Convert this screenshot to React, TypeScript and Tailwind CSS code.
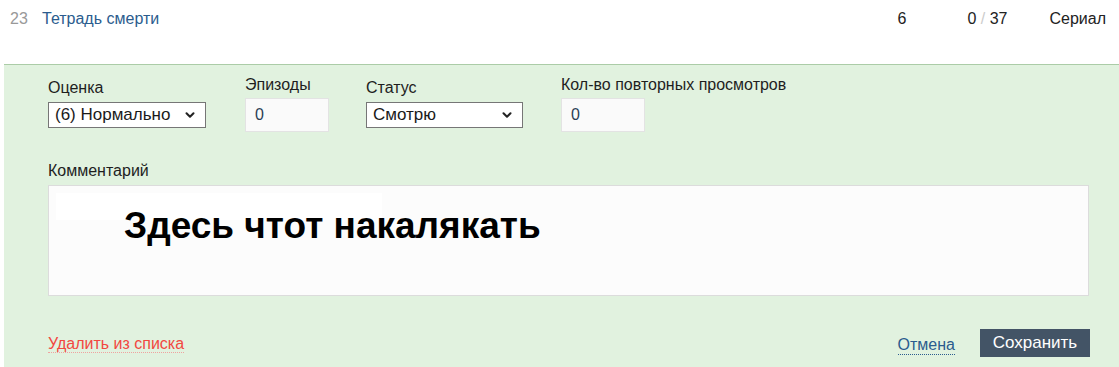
import { ChevronDown } from "lucide-react";

function Select({ value, width }: { value: string; width: string }) {
  return (
    <div className={`relative ${width} h-[26px] mt-[5px] border border-[#767676] bg-white`}>
      <div className="pl-[6px] leading-[24px] text-[17px] text-[#1a1a1a]">{value}</div>
      <ChevronDown className="absolute right-[8px] top-[5px] size-[14px] text-[#222]" strokeWidth={3.5} />
    </div>
  );
}

function NumInput({ value }: { value: string }) {
  return (
    <div className="mt-[4px] w-[84px] h-[34px] border border-[#e3e3e3] bg-[#fafafa] pl-[9px] leading-[32px] text-[16px] text-[#2c3e55]">
      {value}
    </div>
  );
}

export default function App() {
  return (
    <div className="w-[1119px] h-[367px] overflow-hidden bg-white font-['Liberation_Sans',Arial,sans-serif]">
      {/* list row */}
      <div className="flex items-start h-[64px] pt-[10px] text-[16px] leading-[18px]">
        <span className="ml-[10px] w-[32px] text-[#999]">23</span>
        <span className="text-[#2b5c8e]">Тетрадь смерти</span>
        <span className="ml-auto w-[70px] text-[#222]">6</span>
        <span className="w-[82px] text-[#222]">
          0 <span className="text-[#ccc]">/</span> 37
        </span>
        <span className="mr-[13px] text-[#222]">Сериал</span>
      </div>

      {/* edit panel */}
      <div className="ml-[4px] h-[303px] border-t border-[#abcca7] bg-[#e1f2df] pl-[44px] pr-[29px] pt-[11px] text-[16px] leading-[18px] text-[#1e1e1e]">
        <div className="flex items-start">
          <div className="w-[159px] pt-[3px]">
            <div>Оценка</div>
            <Select value="(6) Нормально" width="w-[158px]" />
          </div>
          <div className="ml-[38px] w-[84px]">
            <div>Эпизоды</div>
            <NumInput value="0" />
          </div>
          <div className="ml-[37px] w-[157px] pt-[3px]">
            <div>Статус</div>
            <Select value="Смотрю" width="w-[157px]" />
          </div>
          <div className="ml-[38px]">
            <div>Кол-во повторных просмотров</div>
            <NumInput value="0" />
          </div>
        </div>

        <div className="mt-[30px]">Комментарий</div>
        <div className="mt-[5px] h-[111px] w-[1041px] border border-[#dcdcdc] bg-[#fcfcfc] p-[7px]">
          <div className="h-[27px] w-[326px] bg-white" />
          <div className="-mt-[13px] ml-[68px] text-[37px] leading-[37px] font-bold text-black">
            Здесь чтот накалякать
          </div>
        </div>

        <div className="mt-[33px] flex items-center h-[28px]">
          <span className="mt-[1px] text-[#f2483f] border-b border-dotted border-[#efa3a0] leading-[17px]">
            Удалить из списка
          </span>
          <span className="ml-auto mt-[4px] text-[#2b5c8e] border-b border-dotted border-[#2b5c8e] leading-[18px]">
            Отмена
          </span>
          <button className="ml-[25px] h-[28px] w-[110px] bg-[#435466] text-white text-[17px]">Сохранить</button>
        </div>
      </div>
    </div>
  );
}
